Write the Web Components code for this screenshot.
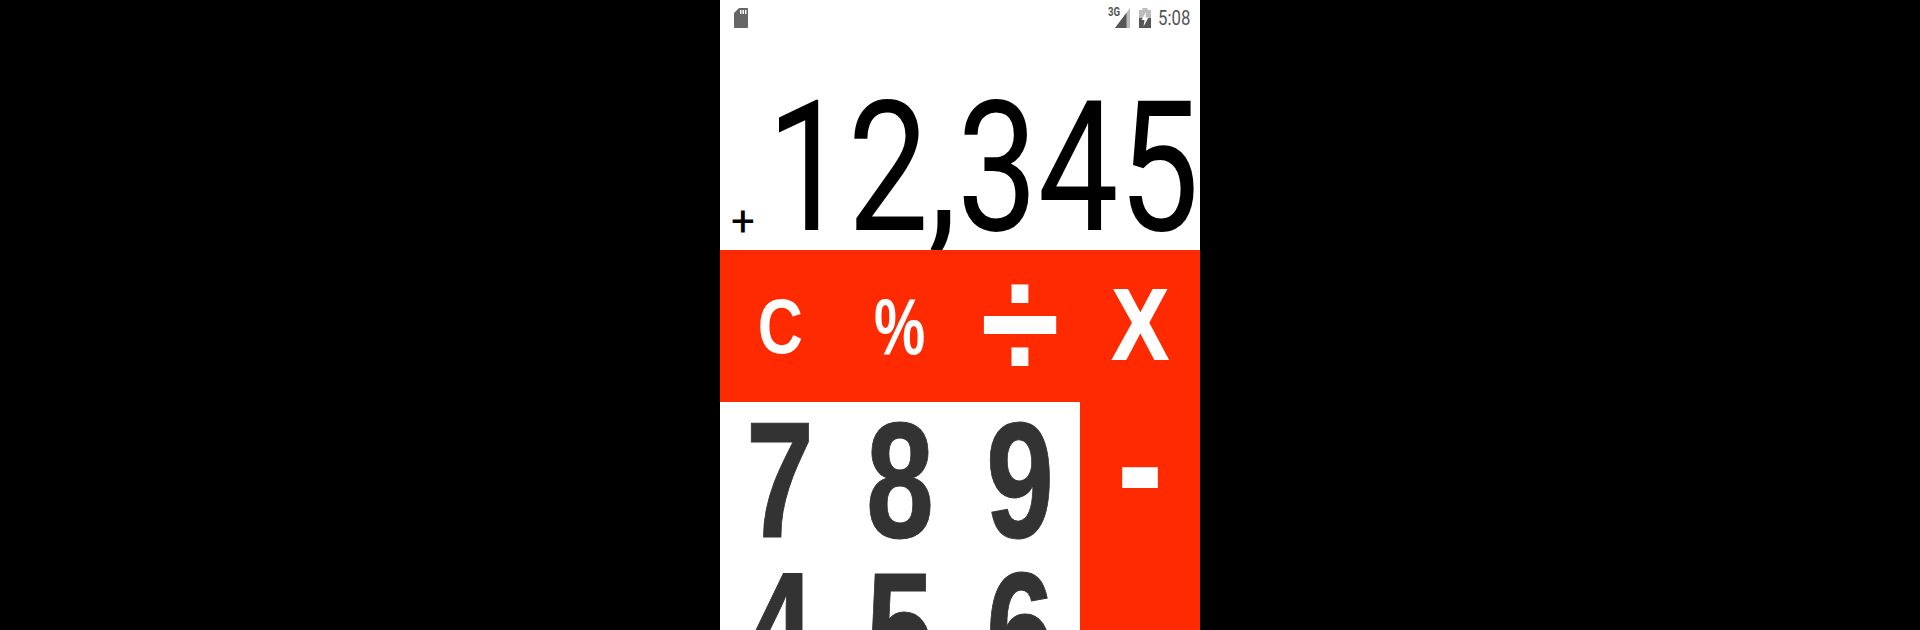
<!DOCTYPE html>
<html>
<head>
<meta charset="utf-8">
<title>Calculator</title>
<style>
  html, body { margin: 0; height: 100%; background: #000; overflow: hidden; }
  body { display: flex; justify-content: center; font-family: "Liberation Sans", sans-serif; }
</style>
</head>
<body>
<calc-app>
  <status-bar slot="status" time="5:08"></status-bar>
  <calc-display slot="display" op="+" value="12,345"></calc-display>
  <calc-key slot="ops" label="C" size="78" sx="0.8"></calc-key>
  <calc-key slot="ops" label="%" size="80" sx="0.72" dy="1"></calc-key>
  <calc-key slot="ops" label="÷" size="144" sx="1" sy="1.13" dy="-1"></calc-key>
  <calc-key slot="ops" label="X" size="100" sx="0.84" dy="-2" heavy="2"></calc-key>
  <calc-key slot="side" label="-" size="140" sx="1" sy="1.25" dy="-14"></calc-key>
  <calc-key slot="digits" dark label="7" size="165" sx="0.74" dy="3" heavy="1"></calc-key>
  <calc-key slot="digits" dark label="8" size="165" sx="0.74" dy="3" heavy="1"></calc-key>
  <calc-key slot="digits" dark label="9" size="165" sx="0.74" dy="3" heavy="1"></calc-key>
  <calc-key slot="digits" dark label="4" size="165" sx="0.74" dy="3" heavy="1"></calc-key>
  <calc-key slot="digits" dark label="5" size="165" sx="0.74" dy="3" heavy="1"></calc-key>
  <calc-key slot="digits" dark label="6" size="165" sx="0.74" dy="3" heavy="1"></calc-key>
</calc-app>
<script>
const eAppTemplate = document.createElement('template');
eAppTemplate.innerHTML = `
<style>
  :host { display: grid; width: 480px; height: 630px; overflow: hidden; background: #fff;
          grid-template-columns: 360px 120px; grid-template-rows: 250px 152px 300px; }
  #top { grid-column: 1 / 3; display: flex; flex-direction: column; overflow: hidden; background: #fff; }
  #ops { grid-column: 1 / 3; display: grid; grid-template-columns: repeat(4, 120px); background: #ff2a00; }
  #digits { display: grid; grid-template-columns: repeat(3, 120px); grid-auto-rows: 150px; background: #fff; }
  #side { background: #ff2a00; display: grid; grid-auto-rows: 150px; }
</style>
<section id="top"><slot name="status"></slot><slot name="display"></slot></section>
<section id="ops"><slot name="ops"></slot></section>
<section id="digits"><slot name="digits"></slot></section>
<section id="side"><slot name="side"></slot></section>
`;
class CCalcApp extends HTMLElement {
    constructor() {
        super();
        this.attachShadow({ mode: 'open' }).appendChild(eAppTemplate.content.cloneNode(true));
    }
}
customElements.define('calc-app', CCalcApp);

const eStatusTemplate = document.createElement('template');
eStatusTemplate.innerHTML = `
<style>
  :host { display: flex; align-items: center; height: 36px; box-sizing: border-box; padding: 0 10px 0 14px; color: #555; }
  svg { display: block; }
  #sd { margin-right: auto; }
  #net { position: relative; width: 22px; height: 20px; margin-right: 9px; }
  #net svg { position: absolute; right: 0; top: 0; }
  #net b { position: absolute; left: 0; top: -3px; font: bold 12px/14px "Roboto", sans-serif; transform: scaleX(.8); transform-origin: left; color: #555; }
  #bat { margin-right: 7px; }
  #time { font: 21px/24px "Roboto", sans-serif; display: block; width: 32px; transform: scaleX(.8); transform-origin: left; white-space: nowrap; }
</style>
<svg id="sd" width="14" height="20" viewBox="0 0 14 20"><path fill="#666" fill-rule="evenodd" d="M5 0h8a1 1 0 0 1 1 1v18a1 1 0 0 1-1 1H1a1 1 0 0 1-1-1V5zM6 2v4h1.500V2zM8.500 2v4H10V2zM11 2v4h1.500V2z"/></svg>
<div id="net">
  <b>3G</b>
  <svg width="15" height="20" viewBox="0 0 15 20"><path fill="#bbb" d="M15 0v20H0z"/><path fill="#555" d="M11.500 4.700V20H0z"/></svg>
</div>
<svg id="bat" width="12" height="20" viewBox="0 0 12 20"><path fill="#bbb" d="M3.500 0h5v2H12v18H0V2h3.500z"/><path fill="#555" d="M0 10h12v10H0z"/><path fill="#fff" d="M7 4 2.500 12h3l-1 6.500L9.500 9.500H6.500z"/></svg>
<span id="time"></span>
`;
class CStatusBar extends HTMLElement {
    constructor() {
        super();
        this.attachShadow({ mode: 'open' }).appendChild(eStatusTemplate.content.cloneNode(true));
    }
    connectedCallback() {
        this.shadowRoot.getElementById('time').textContent = this.getAttribute('time') || '';
    }
}
customElements.define('status-bar', CStatusBar);

const eDisplayTemplate = document.createElement('template');
eDisplayTemplate.innerHTML = `
<style>
  :host { display: flex; align-items: flex-end; justify-content: space-between; height: 214px; font-family: "Roboto", sans-serif; color: #000; }
  #op { flex: none; font-size: 42px; line-height: 42px; margin: 0 0 7px 11px; }
  #value { flex: none; width: 431px; font-size: 182px; line-height: 182px; margin: 0 2px -9px 0; white-space: nowrap;
           transform: scaleX(.79); transform-origin: left bottom; }
</style>
<span id="op"></span><span id="value"></span>
`;
class CCalcDisplay extends HTMLElement {
    constructor() {
        super();
        this.attachShadow({ mode: 'open' }).appendChild(eDisplayTemplate.content.cloneNode(true));
    }
    connectedCallback() {
        this.shadowRoot.getElementById('op').textContent = this.getAttribute('op') || '';
        this.shadowRoot.getElementById('value').textContent = this.getAttribute('value') || '';
    }
}
customElements.define('calc-display', CCalcDisplay);

const eKeyTemplate = document.createElement('template');
eKeyTemplate.innerHTML = `
<style>
  :host { display: flex; align-items: center; justify-content: center; overflow: hidden; color: #fff; font-family: "Liberation Sans", sans-serif; font-weight: bold; }
  :host([dark]) { color: #333; }
  span { display: block; flex: none; line-height: 1; font-size: var(--size); -webkit-text-stroke: var(--heavy, 0px) currentColor;
         transform: translateY(var(--dy, 0px)) scale(var(--sx, 1), var(--sy, 1)); }
</style>
<span></span>
`;
class CCalcKey extends HTMLElement {
    constructor() {
        super();
        this.attachShadow({ mode: 'open' }).appendChild(eKeyTemplate.content.cloneNode(true));
    }
    connectedCallback() {
        this.shadowRoot.querySelector('span').textContent = this.getAttribute('label') || '';
        this.style.setProperty('--size', (this.getAttribute('size') || 100) + 'px');
        this.style.setProperty('--sx', this.getAttribute('sx') || 1);
        this.style.setProperty('--sy', this.getAttribute('sy') || 1);
        this.style.setProperty('--dy', (this.getAttribute('dy') || 0) + 'px');
        this.style.setProperty('--heavy', (this.getAttribute('heavy') || 0) + 'px');
    }
}
customElements.define('calc-key', CCalcKey);
</script>
</body>
</html>
